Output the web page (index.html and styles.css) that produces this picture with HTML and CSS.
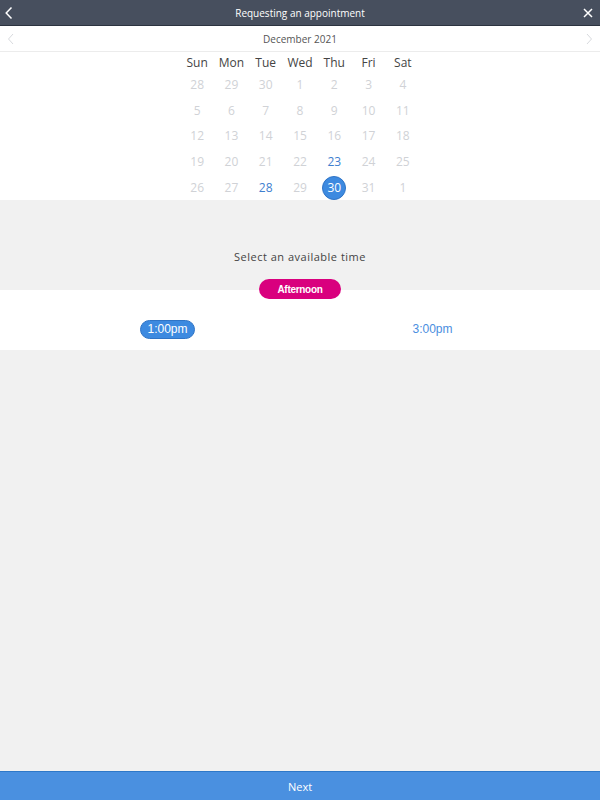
FILE: index.html
```html
<!DOCTYPE html>
<html lang="en">
<head>
  <meta charset="UTF-8">
  <title>Requesting an appointment</title>
  <meta name="viewport" content="width=device-width, initial-scale=1.0">
  <link rel="stylesheet" href="styles.css">
</head>
<body>
  <div class="app">
    <header class="topbar">
      <button class="icon-btn back" aria-label="Back">
        <svg width="10" height="14" viewBox="0 0 10 14"><path d="M7.5 1.5 L2.2 7 L7.5 12.5" fill="none" stroke="#fff" stroke-width="1.5"/></svg>
      </button>
      <span class="title">Requesting an appointment</span>
      <button class="icon-btn close" aria-label="Close">
        <svg width="10" height="10" viewBox="0 0 10 10"><path d="M1 1 L9 9 M9 1 L1 9" fill="none" stroke="#fff" stroke-width="1.5"/></svg>
      </button>
    </header>

    <div class="month-bar">
      <svg class="month-nav" width="8" height="12" viewBox="0 0 8 12"><path d="M6 1 L1.5 6 L6 11" fill="none" stroke="#d8dade" stroke-width="1"/></svg>
      <span class="month">December 2021</span>
      <svg class="month-nav" width="8" height="12" viewBox="0 0 8 12"><path d="M2 1 L6.5 6 L2 11" fill="none" stroke="#d8dade" stroke-width="1"/></svg>
    </div>

    <section class="calendar">
      <div class="grid">
        <span class="dow">Sun</span><span class="dow">Mon</span><span class="dow">Tue</span><span class="dow">Wed</span><span class="dow">Thu</span><span class="dow">Fri</span><span class="dow">Sat</span>

        <span class="day">28</span><span class="day">29</span><span class="day">30</span><span class="day">1</span><span class="day">2</span><span class="day">3</span><span class="day">4</span>
        <span class="day">5</span><span class="day">6</span><span class="day">7</span><span class="day">8</span><span class="day">9</span><span class="day">10</span><span class="day">11</span>
        <span class="day">12</span><span class="day">13</span><span class="day">14</span><span class="day">15</span><span class="day">16</span><span class="day">17</span><span class="day">18</span>
        <span class="day">19</span><span class="day">20</span><span class="day">21</span><span class="day">22</span><span class="day available">23</span><span class="day">24</span><span class="day">25</span>
        <span class="day">26</span><span class="day">27</span><span class="day available">28</span><span class="day">29</span><span class="day selected"><span>30</span></span><span class="day">31</span><span class="day">1</span>
      </div>
    </section>

    <section class="times">
      <p class="prompt">Select an available time</p>
      <div class="period">
        <span class="period-pill">Afternoon</span>
      </div>
      <div class="slots">
        <div class="slot-cell"><span class="slot active">1:00pm</span></div>
        <div class="slot-cell"><span class="slot">3:00pm</span></div>
      </div>
    </section>

    <footer class="next-bar">Next</footer>
  </div>
</body>
</html>
```

FILE: styles.css
```css
* {
  box-sizing: border-box;
}
body {
  margin: 0;
  font-family: "Open Sans", sans-serif;
  background-color: #f1f1f1;
  color: #333;
}
.app {
  height: 800px;
  display: flex;
  flex-direction: column;
}
.topbar {
  height: 26px;
  background-color: #474f5e;
  border-bottom: 1px solid #2c3340;
  display: flex;
  align-items: center;
  justify-content: space-between;
  color: #fff;
}
.icon-btn {
  background: none;
  border: none;
  padding: 0;
  width: 23px;
  height: 25px;
  display: flex;
  align-items: center;
  cursor: pointer;
}
.back {
  justify-content: flex-start;
  padding-left: 4px;
}
.close {
  justify-content: flex-end;
  padding-right: 7px;
}
.title {
  font-size: 10px;
}
.month-bar {
  height: 26px;
  background-color: #fff;
  border-bottom: 1px solid #ececec;
  display: flex;
  align-items: center;
  justify-content: space-between;
  padding: 0 7px;
}
.month {
  font-size: 10px;
  color: #555;
}
.calendar {
  background-color: #fff;
  height: 148px;
}
.grid {
  width: 240px;
  margin: 0 auto;
  display: grid;
  grid-template-columns: repeat(7, 1fr);
  grid-template-rows: 22px;
  grid-auto-rows: 25.7px;
}
.dow {
  font-size: 12px;
  color: #444;
  text-align: center;
  line-height: 22px;
}
.day {
  font-size: 12px;
  color: #d0d2d6;
  text-align: center;
  line-height: 22px;
  display: flex;
  justify-content: center;
  align-items: flex-start;
}
.day.available {
  color: #3f7fcf;
}
.day.selected span {
  width: 24px;
  height: 24px;
  border-radius: 50%;
  background-color: #3d8ae0;
  border: 1px solid #2f74c6;
  color: #fff;
  display: flex;
  align-items: center;
  justify-content: center;
  font-size: 12px;
  margin-top: -1px;
}
.times {
  display: flex;
  flex-direction: column;
}
.prompt {
  margin: 0;
  padding-top: 49px;
  height: 79px;
  text-align: center;
  font-size: 11px;
  letter-spacing: 0.5px;
  color: #444;
}
.period {
  height: 11px;
  display: flex;
  justify-content: center;
}
.period-pill {
  position: relative;
  z-index: 1;
  width: 82px;
  height: 20px;
  border-radius: 10px;
  background-color: #d9007e;
  color: #fff;
  font-family: "Liberation Sans", Arial, sans-serif;
  font-size: 10px;
  font-weight: bold;
  letter-spacing: -0.3px;
  display: flex;
  align-items: center;
  justify-content: center;
}
.slots {
  background-color: #fff;
  height: 60px;
  display: grid;
  grid-template-columns: 1fr 1fr;
  padding: 18px 35px 0;
  align-items: center;
}
.slot-cell {
  display: flex;
  justify-content: center;
}
.slot {
  font-family: "Liberation Sans", Arial, sans-serif;
  font-size: 12px;
  color: #4a8ee0;
  height: 19px;
  padding: 0 6px;
  border-radius: 10px;
  display: flex;
  align-items: center;
}
.slot.active {
  background-color: #3d8ae0;
  border: 1px solid #2f74c6;
  color: #fff;
}
.next-bar {
  margin-top: auto;
  height: 29px;
  background-color: #4a90e0;
  border-top: 1px solid #2e78c8;
  color: #fff;
  font-size: 11px;
  display: flex;
  align-items: center;
  justify-content: center;
}
```
